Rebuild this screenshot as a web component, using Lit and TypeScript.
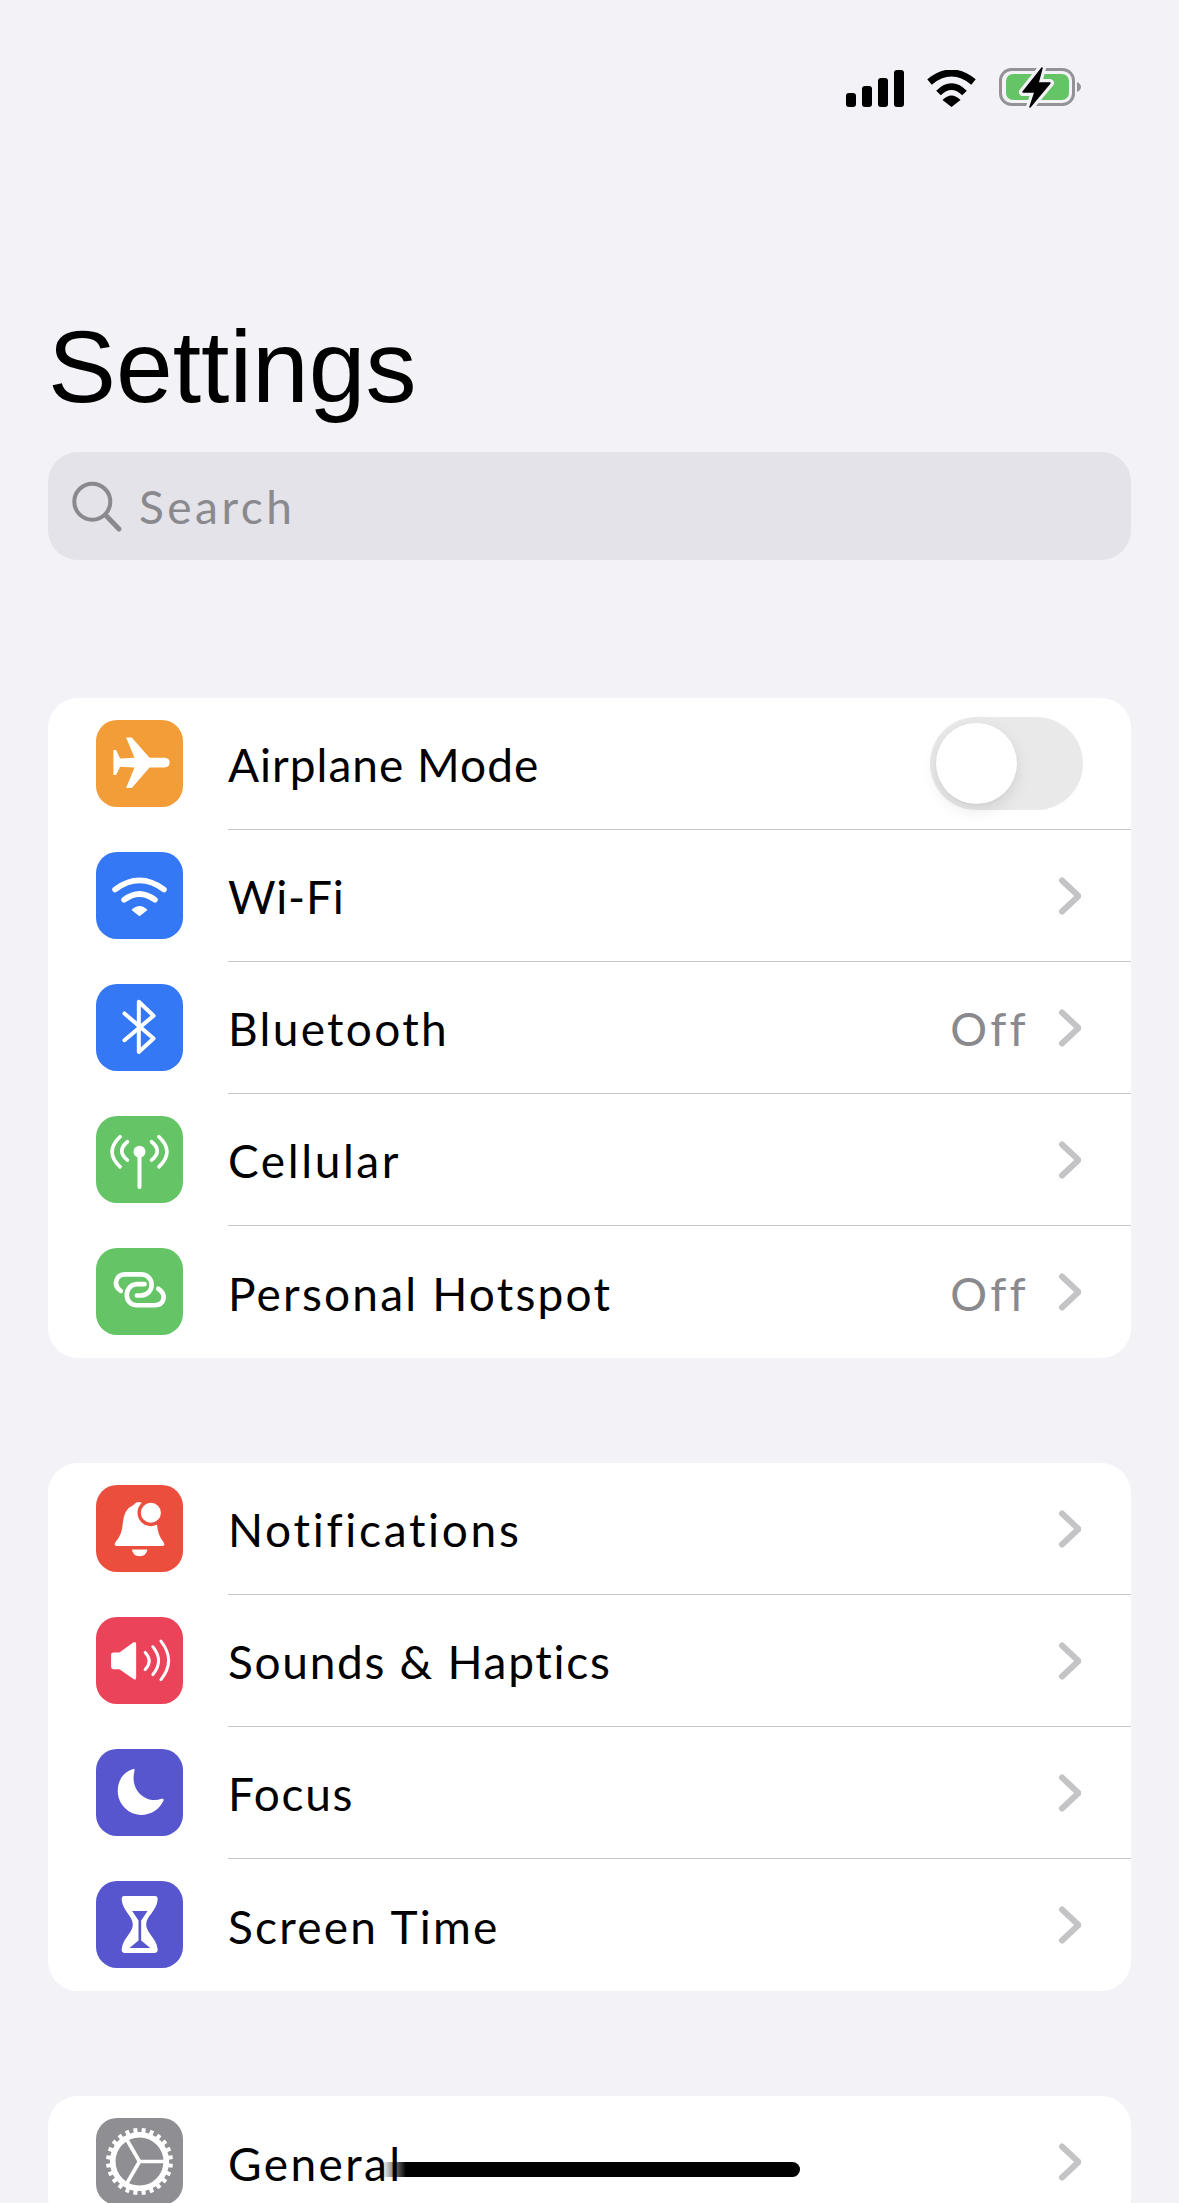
import { LitElement, html, css, svg } from 'lit';
import { customElement } from 'lit/decorators.js';

const stroke = (d: string, w: number) =>
  svg`<path d=${d} fill="none" stroke="#fff" stroke-width=${w} stroke-linecap="round" stroke-linejoin="round"/>`;

// gear teeth and spokes are computed around the centre of the 260 box
const gearTeeth = Array.from({ length: 24 }, (_, i) => {
  const a = (i * 15 + 7.5) * Math.PI / 180;
  const x = (r: number) => 130 + r * Math.cos(a);
  const y = (r: number) => 130 + r * Math.sin(a);
  return svg`<line x1=${x(82)} y1=${y(82)} x2=${x(100)} y2=${y(100)} stroke="#fff" stroke-width="12"/>`;
});
const gearSpokes = [0, 120, 240].map((deg) => {
  const a = deg * Math.PI / 180;
  return svg`<line x1="130" y1="130" x2=${130 + 74 * Math.cos(a)} y2=${130 + 74 * Math.sin(a)} stroke="#fff" stroke-width="11"/>`;
});

const icons: Record<string, unknown> = {
  airplane: svg`<path fill="#fff" d="M90 52H107L160 113H205Q220 114 220 127Q220 141 205 142H160L107 203H90L115 142L72 140L60 164H52V90H60L72 115L115 113Z"/>`,
  wifi: svg`${stroke('M57 112Q130 58 203 112', 17)}${stroke('M84 143Q130 108 176 143', 17)}<path fill="#fff" d="M106 173Q130 150 154 173L130 192Z"/>`,
  bluetooth: stroke('M85 88L172 163L128 203V53L172 95L85 168', 12),
  cellular: svg`<circle cx="130" cy="107" r="18" fill="#fff"/>${stroke('M130 110V212', 12)}${stroke('M94 77Q60 105 94 132', 11)}${stroke('M72 62Q24 107 72 152', 11)}${stroke('M166 77Q200 105 166 132', 11)}${stroke('M188 62Q236 107 188 152', 11)}`,
  hotspot: svg`${stroke('M74 128C50 112 58 79 88 79H135C175 79 178 138 135 142H122', 14)}${stroke('M186 122C212 138 205 171 175 171H122C82 171 82 110 122 108H145', 14)}`,
  bell: svg`<path fill="#fff" d="M62 182Q50 182 60 168Q78 148 80 115Q83 72 112 60Q122 45 138 54Q180 70 182 115Q184 148 200 168Q210 182 198 182Z"/><path fill="#fff" d="M107 193H154Q150 213 130 213Q111 213 107 193Z"/><circle cx="164" cy="83" r="40" fill="#eb4e3d"/><circle cx="164" cy="83" r="30" fill="#fff"/>`,
  sound: svg`<path fill="#fff" d="M52 106H70L110 77Q120 70 120 82V180Q120 192 110 184L70 156H52Q45 156 45 149V113Q45 106 52 106Z"/>${stroke('M147 106Q171 131 147 157', 9)}${stroke('M170 89Q204 131 170 172', 9)}${stroke('M194 72Q240 130 194 187', 9)}`,
  moon: svg`<path fill="#fff" d="M112 60C80 70 65 95 65 125C65 165 97 197 135 197C165 197 190 180 202 154Q203 147 196 149C150 165 100 125 115 65Q116 57 112 60Z"/>`,
  hourglass: svg`<path fill="#fff" d="M85 45H176Q186 45 184 58C180 90 150 105 150 130C150 155 180 170 184 202Q186 215 176 215H85Q75 215 77 202C81 170 110 155 110 130C110 105 81 90 77 58Q75 45 85 45Z"/><path fill="#5756ce" d="M108 90H154L135 118V178L162 200H100L127 178V118Z"/>`,
  gear: svg`<circle cx="130" cy="130" r="80" fill="none" stroke="#fff" stroke-width="17"/>${gearTeeth}${gearSpokes}`,
};

interface Row {
  label: string;
  icon: string;
  color: string;
  track: number; // letter spacing, the reference's hand font runs wider than Lato
  value?: string;
  toggle?: boolean;
}

const groups: Row[][] = [
  [
    { label: 'Airplane Mode', icon: 'airplane', color: '#f29d38', track: 1, toggle: true },
    { label: 'Wi-Fi', icon: 'wifi', color: '#3478f6', track: 0.8 },
    { label: 'Bluetooth', icon: 'bluetooth', color: '#3478f6', track: 2.3, value: 'Off' },
    { label: 'Cellular', icon: 'cellular', color: '#65c466', track: 2.6 },
    { label: 'Personal Hotspot', icon: 'hotspot', color: '#65c466', track: 2.2, value: 'Off' },
  ],
  [
    { label: 'Notifications', icon: 'bell', color: '#eb4e3d', track: 2.7 },
    { label: 'Sounds & Haptics', icon: 'sound', color: '#eb445a', track: 1.7 },
    { label: 'Focus', icon: 'moon', color: '#5756ce', track: 1.7 },
    { label: 'Screen Time', icon: 'hourglass', color: '#5756ce', track: 2.2 },
  ],
  [{ label: 'General', icon: 'gear', color: '#8e8e93', track: 2.4 }],
];

@customElement('app-root')
export class AppRoot extends LitElement {
  static styles = css`
    :host {
      display: block;
      position: relative;
      height: 2203px;
      overflow: hidden;
      background: #f2f2f7;
      color: #000;
      font-family: 'Lato', sans-serif;
    }
    .status {
      display: flex;
      justify-content: flex-end;
      align-items: center;
      gap: 22px;
      height: 40px;
      padding: 68px 98px 0 0;
    }
    .status svg { display: block; }
    .title {
      margin: 199px 0 25px 48px;
      font: 400 102px/120px 'Liberation Sans', Arial, sans-serif;
    }
    .search {
      display: flex;
      align-items: center;
      gap: 11px;
      height: 108px;
      margin: 0 48px 138px;
      padding-left: 22px;
      border-radius: 30px;
      background: #e3e3e9;
      color: #8a8a8e;
      font-size: 46px;
      letter-spacing: 3.5px;
    }
    .card {
      margin: 0 48px 105px;
      border-radius: 30px;
      background: #fff;
      overflow: hidden;
    }
    .row {
      display: flex;
      align-items: center;
      gap: 45px;
      padding-left: 48px;
      height: 132px;
    }
    .icon {
      flex: none;
      display: block;
      width: 87px;
      height: 87px;
      margin-bottom: 1px;
      border-radius: 21px;
    }
    .content {
      flex: 1;
      display: flex;
      align-items: center;
      box-sizing: border-box;
      height: 132px;
      padding-right: 48px;
      font-size: 46px;
    }
    .row:not(:last-child) .content { border-bottom: 1.5px solid #c6c6c8; }
    .label { flex: 1; padding-top: 2px; }
    .value {
      padding-top: 2px;
      margin-right: 28px;
      color: #8a8a8e;
      letter-spacing: 3.3px;
    }
    .chevron { display: block; margin-right: 2px; }
    .toggle {
      position: relative;
      width: 153px;
      height: 93px;
      border-radius: 47px;
      background: #e9e9ea;
    }
    .knob {
      position: absolute;
      left: 6px;
      top: 6px;
      width: 81px;
      height: 81px;
      border-radius: 50%;
      background: #fff;
      box-shadow: 0 6px 16px rgba(0, 0, 0, 0.1), 0 1px 2px rgba(0, 0, 0, 0.05);
    }
    .home {
      position: absolute;
      left: 382px;
      top: 2162px;
      width: 418px;
      height: 15px;
      border-radius: 0 8px 8px 0;
      background: linear-gradient(to right, transparent, #000 24px);
    }
  `;

  statusBar() {
    return html`<div class="status">
      <svg width="58" height="37" viewBox="0 0 58 37">
        <rect x="0" y="23" width="10" height="14" rx="3"/>
        <rect x="16" y="16" width="10" height="21" rx="3"/>
        <rect x="32" y="8" width="10" height="29" rx="3"/>
        <rect x="48" y="0" width="10" height="37" rx="3"/>
      </svg>
      <svg width="51" height="37" viewBox="0 0 51 37">
        <path d="M3.5 12Q25.5 -6 47.5 12" fill="none" stroke="#000" stroke-width="7"/>
        <path d="M12.5 23Q25.5 10 38.5 23" fill="none" stroke="#000" stroke-width="6.5"/>
        <path d="M16.5 30Q25.5 21 34.5 30L25.5 37Z"/>
      </svg>
      <svg width="82" height="42" viewBox="0 0 82 42">
        <rect x="1.5" y="2.5" width="73" height="35" rx="11" fill="none" stroke="#929297" stroke-width="3"/>
        <rect x="7" y="7" width="63" height="26" rx="7" fill="#65c466"/>
        <path d="M78 15Q82 17 82 20Q82 23 78 25Z" fill="#929297"/>
        <path d="M43 1L24 25H36L31 40L51 16H39Z" fill="none" stroke="#f2f2f7" stroke-width="8" stroke-linejoin="round"/>
        <path d="M43 1L24 25H36L31 40L51 16H39Z" fill="#000" stroke="#000" stroke-width="1.5" stroke-linejoin="round"/>
      </svg>
    </div>`;
  }

  renderRow(row: Row) {
    return html`<div class="row">
      <svg class="icon" viewBox="0 0 260 260" style="background:${row.color}">${icons[row.icon]}</svg>
      <div class="content">
        <span class="label" style="letter-spacing:${row.track}px">${row.label}</span>
        ${row.value ? html`<span class="value">${row.value}</span>` : ''}
        ${row.toggle
          ? html`<div class="toggle"><div class="knob"></div></div>`
          : html`<svg class="chevron" width="24" height="40" viewBox="0 0 24 40">
              <path d="M5 4.5L21.5 20L5 35.5" fill="none" stroke="#c4c4c6" stroke-width="6" stroke-linecap="round" stroke-linejoin="round"/>
            </svg>`}
      </div>
    </div>`;
  }

  render() {
    return html`
      ${this.statusBar()}
      <div class="title">Settings</div>
      <div class="search">
        <svg width="58" height="58" viewBox="0 0 58 58">
          <circle cx="22.3" cy="24.7" r="18" fill="none" stroke="#8a8a8e" stroke-width="4"/>
          <path d="M36 38.5L49 52" stroke="#8a8a8e" stroke-width="5" stroke-linecap="round"/>
        </svg>
        <span>Search</span>
      </div>
      ${groups.map((rows) => html`<div class="card">${rows.map((r) => this.renderRow(r))}</div>`)}
      <div class="home"></div>
    `;
  }
}
